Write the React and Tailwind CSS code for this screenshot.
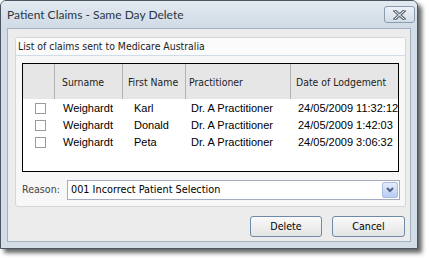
import { useState } from "react";

const rows = [
  { surname: "Weighardt", first: "Karl", prac: "Dr. A Practitioner", date: "24/05/2009 11:32:12" },
  { surname: "Weighardt", first: "Donald", prac: "Dr. A Practitioner", date: "24/05/2009 1:42:03" },
  { surname: "Weighardt", first: "Peta", prac: "Dr. A Practitioner", date: "24/05/2009 3:06:32" },
];

const ui = { fontFamily: '"Liberation Sans", Arial, sans-serif' };
const tahoma = { fontFamily: '"DejaVu Sans Condensed", "Liberation Sans", sans-serif' };
const title = { fontFamily: 'Lato, "Liberation Sans", sans-serif' };

function CloseButton() {
  return (
    <button className="w-[31px] h-[17px] rounded-[3px] border border-[#8b9cb2] bg-gradient-to-b from-[#eef2f7] to-[#d3dde8] flex items-center justify-center">
      <svg width="13" height="10" viewBox="0 0 13 10">
        <path d="M2 1 L11 9 M11 1 L2 9" stroke="#5f6b78" strokeWidth="3.2" strokeLinecap="square" />
        <path d="M2 1 L11 9 M11 1 L2 9" stroke="#ffffff" strokeWidth="1" strokeLinecap="square" />
      </svg>
    </button>
  );
}

function Checkbox({ checked, onChange }) {
  return (
    <span
      onClick={onChange}
      className="w-[11px] h-[11px] border border-[#9a9a9a] bg-white flex items-center justify-center"
    >
      {checked && <span className="w-[5px] h-[5px] bg-[#333]" />}
    </span>
  );
}

export default function App() {
  const [checked, setChecked] = useState([false, false, false]);

  return (
    <div className="w-[429px] h-[258px] bg-white" style={ui}>
      <div className="w-[418px] h-[249px] flex flex-col border border-[#4b5460] rounded-t-[6px] bg-[#d3dde8] shadow-[4px_4px_4px_rgba(0,0,0,0.6)]">
        {/* Title bar */}
        <div className="h-[27px] flex items-center justify-between pl-[6px] pr-[2px] rounded-t-[5px] bg-gradient-to-b from-[#e2e9f1] to-[#d0dbe6]">
          <span className="text-[12px] text-[#2b3645]" style={title}>
            Patient Claims - Same Day Delete
          </span>
          <CloseButton />
        </div>

        {/* Body */}
        <div className="flex-1 mx-[6px] mb-[6px] border border-[#a3b0be] bg-[#ececec] flex flex-col pt-[8px] pl-[7px] pr-[4px]">
          {/* Group box */}
          <div className="h-[170px] border border-[#d3d6da] rounded-[3px] bg-[#f7f7f7] flex flex-col">
            <div className="h-[18px] flex items-center pl-[2px] bg-[#fbfbfb] border-b border-[#cfdcec] text-[10.4px] text-[#222]" style={tahoma}>
              List of claims sent to Medicare Australia
            </div>

            <div className="mt-[7px] ml-[6px] w-[377px] h-[109px] border border-black bg-white overflow-hidden">
              {/* Header */}
              <div className="h-[35px] flex bg-[#e6e6e6] text-[10.4px] text-[#222]" style={tahoma}>
                <div className="w-[32px] border-r border-[#b4b4b4]" />
                <div className="w-[68px] border-r border-[#b4b4b4] flex items-center pl-[7px] pt-[3px]">Surname</div>
                <div className="w-[63px] border-r border-[#b4b4b4] flex items-center pl-[5px] pt-[3px]">First Name</div>
                <div className="w-[105px] border-r border-[#b4b4b4] flex items-center pl-[3px] pt-[3px]">Practitioner</div>
                <div className="flex-1 flex items-center pl-[5px] pt-[3px] whitespace-nowrap">Date of Lodgement</div>
              </div>

              {/* Rows */}
              <div className="pt-[1px] text-[11px] text-black">
                {rows.map((r, i) => (
                  <div key={i} className="h-[17px] flex items-center whitespace-nowrap">
                    <div className="w-[32px] flex justify-center pl-[3px]">
                      <Checkbox
                        checked={checked[i]}
                        onChange={() => setChecked(checked.map((c, j) => (j === i ? !c : c)))}
                      />
                    </div>
                    <div className="w-[70px] pl-[8px]">{r.surname}</div>
                    <div className="w-[62px] pl-[9px]">{r.first}</div>
                    <div className="w-[105px] pl-[4px]">{r.prac}</div>
                    <div className="flex-1 pl-[6px] overflow-hidden">{r.date}</div>
                  </div>
                ))}
              </div>
            </div>

            {/* Reason */}
            <div className="mt-[8px] ml-[6px] flex items-center" style={tahoma}>
              <span className="w-[45px] text-[10.6px] text-[#444]">Reason:</span>
              <div className="w-[333px] h-[20px] border border-[#a5acc0] bg-white flex items-center justify-between pl-[3px] pr-[1px]">
                <span className="text-[10.8px] text-black">001 Incorrect Patient Selection</span>
                <span className="w-[16px] h-[16px] rounded-[2px] border border-[#a7bde2] bg-gradient-to-b from-[#e3ecfb] to-[#b8cdf2] flex items-center justify-center">
                  <svg width="8" height="6" viewBox="0 0 8 6">
                    <path d="M1 1 L4 4 L7 1" fill="none" stroke="#4d6185" strokeWidth="2" />
                  </svg>
                </span>
              </div>
            </div>
          </div>

          {/* Buttons */}
          <div className="mt-[9px] flex justify-end gap-[10px] text-[10.6px] text-black" style={tahoma}>
            <button className="w-[72px] h-[21px] rounded-[3px] border border-[#6f8aa8] bg-gradient-to-b from-[#fafafa] to-[#e4e4e4]">
              Delete
            </button>
            <button className="w-[73px] h-[21px] rounded-[3px] border border-[#6f8aa8] bg-gradient-to-b from-[#fafafa] to-[#e4e4e4] mr-[1px]">
              Cancel
            </button>
          </div>
        </div>
      </div>
    </div>
  );
}
